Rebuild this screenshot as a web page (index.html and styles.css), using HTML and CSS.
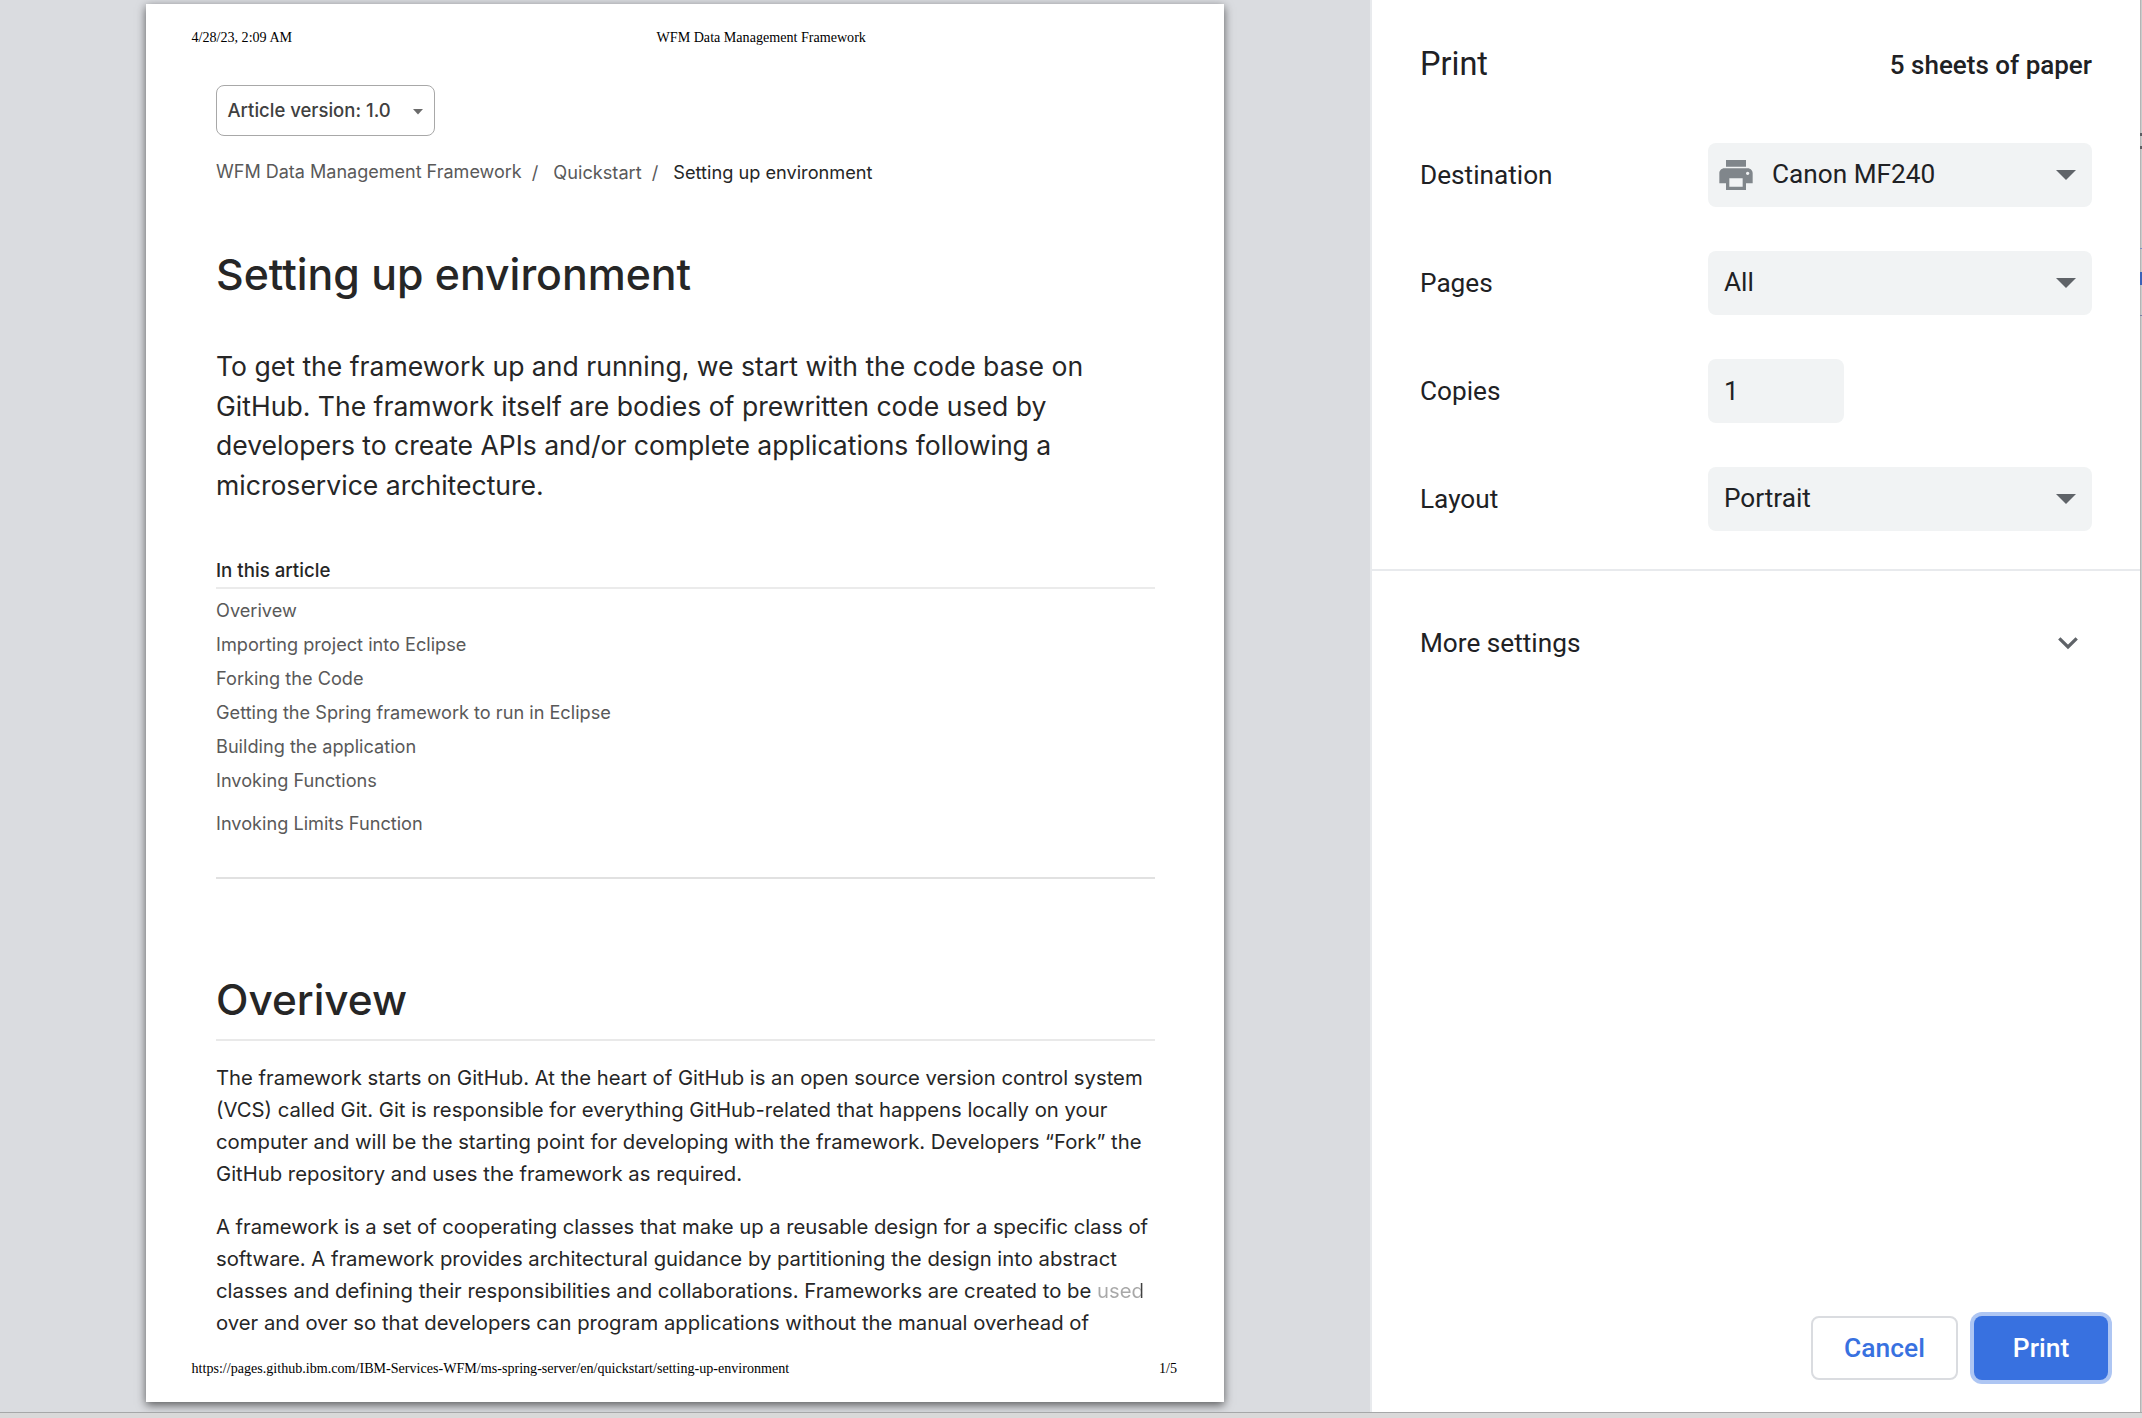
FILE: index.html
```html
<!DOCTYPE html>
<html lang="en">
<head>
<meta charset="utf-8">
<title>Print</title>
<link rel="stylesheet" href="styles.css">
</head>
<body>
<div class="dialog">
  <main class="preview">
    <article class="paper">
      <header class="running-head">
        <span class="stamp">4/28/23, 2:09 AM</span>
        <span>WFM Data Management Framework</span>
      </header>
      <div class="content">
        <div class="version">Article version: 1.0
          <svg width="10" height="6" viewBox="0 0 10 6"><path d="M0 0h10L5 5.5z" fill="#6b6b6b"/></svg>
        </div>
        <nav class="breadcrumb">
          <span class="crumb-root">WFM Data Management Framework</span><span class="slash">/</span><span>Quickstart</span><span class="slash">/</span><span class="current">Setting up environment</span>
        </nav>
        <h1>Setting up environment</h1>
        <p class="lead">To get the framework up and running, we start with the code base on<br>GitHub. The framwork itself are bodies of prewritten code used by<br><span class="snug">developers to create APIs and/or complete applications following a</span><br>microservice architecture.</p>
        <h3>In this article</h3>
        <ul class="toc">
          <li>Overivew</li>
          <li>Importing project into Eclipse</li>
          <li>Forking the Code</li>
          <li>Getting the Spring framework to run in Eclipse</li>
          <li>Building the application</li>
          <li>Invoking Functions</li>
          <li class="spaced">Invoking Limits Function</li>
        </ul>
        <hr>
        <h2>Overivew</h2>
        <p class="body-text">The framework starts on GitHub. At the heart of GitHub is an open source version control system<br>(VCS) called Git. Git is responsible for everything GitHub-related that happens locally on your<br>computer and will be the starting point for developing with the framework. Developers “Fork” the<br>GitHub repository and uses the framework as required.</p>
        <p class="body-text"><span class="snug">A framework is a set of cooperating classes that make up a reusable design for a specific class of</span><br>software. A framework provides architectural guidance by partitioning the design into abstract<br>classes and defining their responsibilities and collaborations. Frameworks are created to be <span class="faded">used</span><br>over and over so that developers can program applications without the manual overhead of</p>
      </div>
      <footer class="running-foot">
        <span>https://pages.github.ibm.com/IBM-Services-WFM/ms-spring-server/en/quickstart/setting-up-environment</span>
        <span>1/5</span>
      </footer>
    </article>
  </main>
  <aside class="sidebar">
    <div class="title-row"><span class="title">Print</span><span class="sheets">5 sheets of paper</span></div>
    <div class="settings">
      <div class="row">
        <span class="label">Destination</span>
        <div class="select with-icon">
          <svg class="printer" width="40" height="40" viewBox="0 0 24 24"><path fill="#80868b" d="M19 8H5c-1.66 0-3 1.34-3 3v6h4v4h12v-4h4v-6c0-1.66-1.34-3-3-3zm-3 11H8v-5h8v5zm3-7c-.55 0-1-.45-1-1s.45-1 1-1 1 .45 1 1-.45 1-1 1zm-1-9H6v4h12V3z"/></svg>
          <span class="value">Canon MF240</span>
          <svg class="caret" width="20" height="10" viewBox="0 0 20 10"><path d="M0 0h20L10 10z" fill="#5f6368"/></svg>
        </div>
      </div>
      <div class="row">
        <span class="label">Pages</span>
        <div class="select"><span class="value">All</span><svg class="caret" width="20" height="10" viewBox="0 0 20 10"><path d="M0 0h20L10 10z" fill="#5f6368"/></svg></div>
      </div>
      <div class="row">
        <span class="label">Copies</span>
        <div class="number">1</div>
      </div>
      <div class="row">
        <span class="label">Layout</span>
        <div class="select"><span class="value">Portrait</span><svg class="caret" width="20" height="10" viewBox="0 0 20 10"><path d="M0 0h20L10 10z" fill="#5f6368"/></svg></div>
      </div>
    </div>
    <div class="more">
      <span>More settings</span>
      <svg width="20" height="13" viewBox="0 0 20 13"><path d="M1.3 1.3L10 10l8.700-8.700" fill="none" stroke="#5f6368" stroke-width="3.3"/></svg>
    </div>
    <div class="actions">
      <button class="btn cancel">Cancel</button>
      <button class="btn print">Print</button>
    </div>
  </aside>
  <div class="backdrop-edge"><i class="mark m1"></i><i class="mark m2"></i><i class="mark m3"></i><i class="mark m4"></i><i class="mark m5"></i></div>
</div>
</body>
</html>
```
FILE: styles.css
```css
* { box-sizing: border-box; }
body { margin: 0; background: #d9d9d9; overflow: hidden; }
.dialog { display: flex; width: 2142px; height: 1413px; border-bottom: 1px solid #a6a7a8; }
.preview { width: 1370px; padding: 4px 0 0 146px; background: #dadce0; overflow: hidden; }
.paper {
  width: 1078px; height: 1398px; padding-top: 23px; background: #fff;
  display: flex; flex-direction: column;
  box-shadow: 0 3px 9px rgba(0, 0, 0, .6);
  font-family: Inter, sans-serif; color: #262626; white-space: nowrap;
}
.running-head, .running-foot {
  display: flex; padding: 0 47px 0 45.500px;
  font: 14.100px/20px "Liberation Serif", serif; color: #000;
}
.stamp { width: 465px; }
.running-foot { justify-content: space-between; margin-top: auto; margin-bottom: 24px; }
.content { padding: 0 69px 0 69.500px; }
.content > * { padding-left: .5px; }
.version {
  display: flex; align-items: center; justify-content: space-between;
  width: 219px; height: 51px; margin-top: 37.500px; padding: 0 11px 0 11px;
  border: 1.500px solid #a8a8a8; border-radius: 8px;
  font-size: 18.500px; font-weight: 500; color: #404040;
}
.content > .version { padding-left: 11px; }
.version svg { margin-top: 4px; }
.breadcrumb { display: flex; margin-top: 22.500px; font-size: 18.200px; line-height: 28px; color: #595959; }
.crumb-root { font-size: 18.020px; }
.slash { margin: 0 15px 0 10px; }
.current { color: #262626; }
h1, h2, h3, p, ul { margin: 0; padding: 0; font-weight: 500; }
h1 { margin-top: 62px; font-size: 42.800px; line-height: 54px; font-weight: 450; }
.lead { margin-top: 44.800px; font-size: 26.570px; line-height: 39.750px; font-weight: 400; }
.snug { letter-spacing: -.04px; }
h3 { margin-top: 51.500px; font-size: 18.700px; line-height: 28px; padding-bottom: 1.700px; border-bottom: 2px solid #ebebeb; }
.toc { margin-top: 5.500px; list-style: none; font-size: 18.160px; line-height: 33.900px; font-weight: 400; color: #595959; }
.spaced { margin-top: 8.600px; }
hr { width: 100%; height: 2px; margin: 36.500px 0 0; border: 0; background: #e1e1e1; }
h2 { margin-top: 93.600px; font-size: 42.300px; line-height: 54px; font-weight: 450; padding-bottom: 12.400px; border-bottom: 2px solid #e9e9e9; }
.body-text { margin-top: 21.400px; font-size: 20.290px; line-height: 31.850px; font-weight: 400; }
.faded { color: transparent; background: linear-gradient(90deg, #a8a8a8 93%, #404040 93%); background-clip: text; -webkit-background-clip: text; }

.sidebar {
  display: flex; flex-direction: column; width: 770px; border-left: 2px solid #e8eaed; background: #fff;
  font-family: Roboto, sans-serif; font-size: 26.200px; color: #202124;
}
.title-row { display: flex; justify-content: space-between; align-items: flex-start; height: 143px; padding: 44px 48px 0 48px; line-height: 40px; }
.title { font-size: 32.500px; }
.sheets { font-size: 26px; line-height: 42px; font-weight: 500; }
.settings { display: flex; flex-direction: column; gap: 44px; padding: 0 48px 38px 48px; border-bottom: 2px solid #e8eaed; }
.row { display: flex; align-items: center; justify-content: space-between; height: 64px; }
.label { width: 288px; }
.select, .number { display: flex; align-items: center; height: 64px; padding: 0 16px; border-radius: 8px; background: #f1f3f4; }
.select { flex: 1; }
.number { width: 136px; margin-right: auto; }
.value { padding-bottom: 2px; }
.with-icon { padding-left: 8px; }
.printer { margin-right: 16px; }
.caret { margin-left: auto; }
.more { display: flex; align-items: center; justify-content: space-between; height: 64px; margin-top: 40px; padding: 0 62px 0 48px; }
.actions { display: flex; justify-content: flex-end; gap: 16px; margin-top: auto; padding: 0 32px 32px 0; }
.btn { height: 64px; border-radius: 8px; font: 500 26.400px Roboto, sans-serif; padding: 0 0 1px; }
.cancel { width: 147px; border: 2px solid #dadce0; background: #fff; color: #3871e0; }
.print { width: 134px; border: 0; background: #3871e0; color: #fff; box-shadow: 0 0 0 4px #aec6f3; }

/* strip of the window behind the dialog */
.backdrop-edge { position: relative; width: 2px; background: linear-gradient(90deg, #b5b5b5 50%, #cbcbcb 50%); }
.mark { position: absolute; left: 0; width: 2px; background: #5c5d62; }
.m1 { top: 133px; height: 3px; }
.m2 { top: 146px; height: 3px; }
.m3 { top: 248px; height: 1px; background: #7b8fc4; }
.m4 { top: 272px; height: 13px; background: #3b62b8; }
.m5 { top: 315px; height: 1px; background: #7b7fa8; }
```
